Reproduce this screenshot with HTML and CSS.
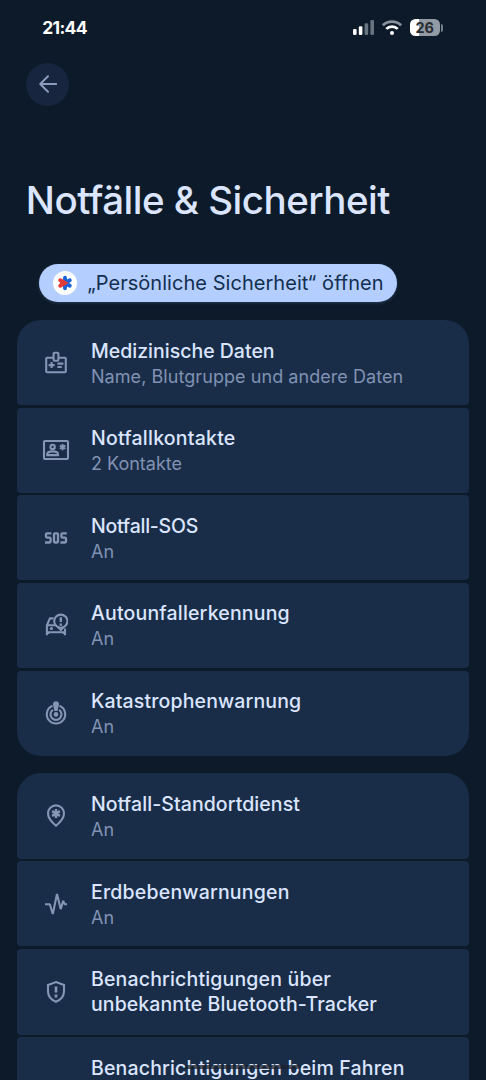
FILE: index.html
```html
<!DOCTYPE html>
<html lang="de">
<head>
<meta charset="utf-8">
<title>Notfälle &amp; Sicherheit</title>
<link rel="stylesheet" href="styles.css">
</head>
<body>
<div class="screen">
  <header class="status">
    <span class="clock">21:44</span>
    <div class="indicators">
      <svg class="signal" viewBox="0 0 21 15"><rect x="0" y="9" width="3.6" height="6" rx="1.2" fill="#fff"/><rect x="5.8" y="6.3" width="3.6" height="8.7" rx="1.2" fill="#fff"/><rect x="11.6" y="3.2" width="3.6" height="11.8" rx="1.2" fill="#687480"/><rect x="17.4" y="0" width="3.6" height="15" rx="1.2" fill="#687480"/></svg>
      <svg class="wifi" viewBox="0 0 20 15" fill="none" stroke-width="2.7"><path d="M.9 5.3a13 13 0 0 1 18.2 0" stroke="#89929b"/><path d="M4.3 8.9a8.1 8.1 0 0 1 11.4 0" stroke="#fff"/><circle cx="10" cy="12.9" r="2" fill="#fff"/></svg>
      <div class="battery"><span>26</span></div>
      <i class="battery-cap"></i>
    </div>
  </header>

  <button class="back" aria-label="Zurück"><svg viewBox="0 0 24 24"><path d="M20.2 12H4.2M12 4.2 4.2 12l7.8 7.8"/></svg></button>
  <h1>Notfälle &amp; Sicherheit</h1>

  <a class="chip">
    <span class="chip-icon"><svg viewBox="0 0 24 24"><g stroke-width="3.9" stroke-linecap="round"><path d="M12 6.8v10.4M12 12l4.8-2.8M12 12l4.8 2.8" stroke="#1b63d8"/><path d="M12 12 7.2 9.2M12 12l-4.8 2.8" stroke="#e23a38"/></g><path d="M7 8.2 16 12 7 15.8z" fill="#e23a38"/></svg></span>
    <span class="chip-label">„Persönliche Sicherheit“ öffnen</span>
  </a>

  <section class="group">
    <div class="row">
      <svg class="icon" viewBox="0 0 24 24"><path d="M9.5 6.8H3.2Q2.2 6.8 2.2 7.8v12.4q0 1 1 1h17.6q1 0 1-1V7.8q0-1-1-1h-6.3M9.6 2.8q0-1 1-1h2.8q1 0 1 1v6q0 1-1 1h-2.8q-1 0-1-1zM4.6 14.1h6M7.6 11.1v6M13.4 12.6h6M13.4 16h4.4"/></svg>
      <div class="text"><h2 class="medical">Medizinische Daten</h2><p class="medical-note">Name, Blutgruppe und andere Daten</p></div>
    </div>
    <div class="row">
      <svg class="icon wide" viewBox="0 0 28 24"><rect x="2" y="3" width="24" height="18" rx="1"/><circle cx="10.6" cy="8.9" r="2.2"/><path d="M5.2 17.1v-.7q0-3 5.4-3t5.4 3v.7z"/><path stroke-width="1.9" d="M20.6 5.9v6.4M17.8 7.5l5.6 3.2M23.4 7.5l-5.6 3.2"/></svg>
      <div class="text"><h2 class="contacts">Notfallkontakte</h2><p>2 Kontakte</p></div>
    </div>
    <div class="row">
      <svg class="icon sos" viewBox="0 0 24 24"><path d="M7.4 7.3H3q-1 0-1 1v2.3q0 1 1 1h2.6q1 0 1 1v2.9q0 1-1 1H1M11 7.3h2q1 0 1 1v7.2q0 1-1 1h-2q-1 0-1-1V8.3q0-1 1-1zM22.8 7.3h-4.4q-1 0-1 1v2.3q0 1 1 1H21q1 0 1 1v2.9q0 1-1 1h-4.6"/></svg>
      <div class="text"><h2 class="sos-title">Notfall-SOS</h2><p>An</p></div>
    </div>
    <div class="row">
      <svg class="icon" viewBox="0 0 24 24"><path d="M9.5 5.4H6L2.9 12.3v10M3 12.2h8M3 19.2h18M21 15.5v6.8M4.2 21v-2M19.8 21v-2"/><circle cx="16.8" cy="8.2" r="6.6"/><path d="m13.8 13.8 3 3.1 3-3.1"/><path d="M16.8 4.2v4.9M16.8 10.6v2.2" stroke-width="2.4"/><circle cx="7.4" cy="15.5" r="1.6" class="solid"/></svg>
      <div class="text"><h2 class="crash">Autounfallerkennung</h2><p>An</p></div>
    </div>
    <div class="row">
      <svg class="icon" viewBox="0 0 24 24"><path d="M8.5 4.8a9.2 9.2 0 1 0 7 0M8.9 8.8a5.5 5.5 0 1 0 6.2 0"/><path class="solid" d="M9 3.2Q9 .3 12 .3t3 2.9L13.6 10h-3.2z"/><circle cx="12" cy="13.4" r="2.3" class="solid"/></svg>
      <div class="text"><h2 class="disaster">Katastrophenwarnung</h2><p>An</p></div>
    </div>
  </section>

  <section class="group">
    <div class="row">
      <svg class="icon" viewBox="0 0 24 24"><path d="M12 21.7Q4 14.9 4 9.4a8 8 0 0 1 16 0q0 5.5-8 12.3z"/><path stroke-width="2.5" d="M12 5v9M8.1 7.2l7.8 4.6M15.9 7.2l-7.8 4.6"/></svg>
      <div class="text"><h2 class="location">Notfall-Standortdienst</h2><p>An</p></div>
    </div>
    <div class="row">
      <svg class="icon" viewBox="0 0 24 24"><path stroke-linejoin="bevel" d="M1 12.2h4.8l3 9.8L13 1.9l3.7 15.2 2.5-8.3 1.5 3.4H23"/></svg>
      <div class="text"><h2 class="quake">Erdbebenwarnungen</h2><p>An</p></div>
    </div>
    <div class="row double">
      <svg class="icon" viewBox="0 0 24 24"><path d="m12 2 8 3v6.3q0 7.4-8 10.4-8-3-8-10.4V5z"/><path d="M12 6.4v6.2M12 14.6v2.8" stroke-width="2.7"/></svg>
      <div class="text"><h2><span class="tracker-a">Benachrichtigungen über</span><br><span class="tracker-b">unbekannte Bluetooth-Tracker</span></h2></div>
    </div>
    <div class="row">
      <span class="icon"></span>
      <div class="text"><h2 class="driving">Benachrichtigungen beim Fahren</h2></div>
    </div>
  </section>
  <div class="home-bar"></div>
</div>
</body>
</html>
```
FILE: styles.css
```css
* { box-sizing: border-box; }
body { margin: 0; background: #0d1a29; color: #dbe5ff; font-family: Inter, "Liberation Sans", sans-serif; }
.screen { position: relative; width: 486px; height: 1080px; overflow: hidden; padding: 0 17.3px; }
.status { height: 55px; display: flex; align-items: center; justify-content: space-between; padding: 0 25.5px 0 25px; }
.clock { color: #fff; font-size: 17.5px; font-weight: 700; letter-spacing: -.7px; }
.indicators { display: flex; align-items: center; }
.signal { width: 21px; height: 15px; margin-right: 8px; }
.wifi { width: 20px; height: 15px; margin-right: 8px; }
.battery { width: 30px; height: 17px; border-radius: 5.5px; background: linear-gradient(90deg, #fff 29%, #929aa3 29%); color: #272c32; font-size: 14.5px; font-weight: 700; line-height: 17px; text-align: center; }
.battery-cap { width: 2px; height: 8px; margin-left: 1.5px; border-radius: 0 2px 2px 0; background: #747e88; }
.back { display: grid; place-items: center; width: 43.5px; height: 43.5px; margin: 7.7px 0 0 8.5px; padding: 0; border: 0; border-radius: 50%; background: #17263e; }
.back svg { width: 24px; height: 24px; fill: none; stroke: #8a9bbd; stroke-width: 2; stroke-linecap: round; stroke-linejoin: round; }
h1 { margin: 68.8px 0 0 8.5px; height: 50px; line-height: 50px; font-size: 38.5px; font-weight: 500; letter-spacing: -.5px; white-space: nowrap; }
.chip { display: flex; align-items: center; width: 358px; height: 38.5px; margin: 39px 0 17.5px 21.5px; padding-left: 14px; border-radius: 20px; background: #b3ceff; color: #132f50; box-shadow: 0 1px 3px #2a3f5d; }
.chip-icon { width: 24px; height: 24px; border-radius: 50%; background: #fff; }
.chip-icon svg { display: block; fill: none; }
.chip-label { margin-left: 10.5px; font-size: 20px; letter-spacing: .04px; white-space: nowrap; }
.group { display: flex; flex-direction: column; gap: 2.5px; width: 451.5px; margin-bottom: 17.8px; }
.row { display: flex; align-items: center; height: 85.15px; padding-left: 27.2px; border-radius: 4px; background: #192d48; }
.row:first-child { border-top-left-radius: 24px; border-top-right-radius: 24px; }
.group:first-of-type .row:last-child { border-bottom-left-radius: 24px; border-bottom-right-radius: 24px; }
.row.double { height: 86.1px; }
.icon { flex: none; width: 24px; height: 24px; margin-right: 22.5px; fill: none; stroke: #8495b6; stroke-width: 2.1; }
.icon.wide { width: 28px; margin: 0 20.5px 0 -2px; }
.icon.sos { stroke-width: 2.3; }
.solid { fill: #8495b6; stroke: none; }
.text { padding-top: 2px; }
.double .text { padding-top: 1px; }
h2, p { margin: 0; white-space: nowrap; line-height: 25px; }
h2 { font-size: 19.5px; font-weight: 500; }
p { color: #8192b3; font-size: 18px; font-weight: 400; }

.medical-note { letter-spacing: .06px; }
.contacts { letter-spacing: .22px; }
.sos-title { letter-spacing: -.25px; }
.crash { letter-spacing: .18px; }
.disaster { letter-spacing: .14px; }
.location { letter-spacing: .08px; }
.quake { letter-spacing: .2px; }
.tracker-a { letter-spacing: .17px; }
.tracker-b { letter-spacing: .1px; }
.driving { letter-spacing: .17px; }

.group:last-of-type .row:last-child { align-items: flex-start; padding-top: 17px; }
.home-bar { position: absolute; left: 185px; top: 1065px; width: 116px; height: 4px; border-radius: 2px; background: rgba(28, 34, 46, .75); }
```
